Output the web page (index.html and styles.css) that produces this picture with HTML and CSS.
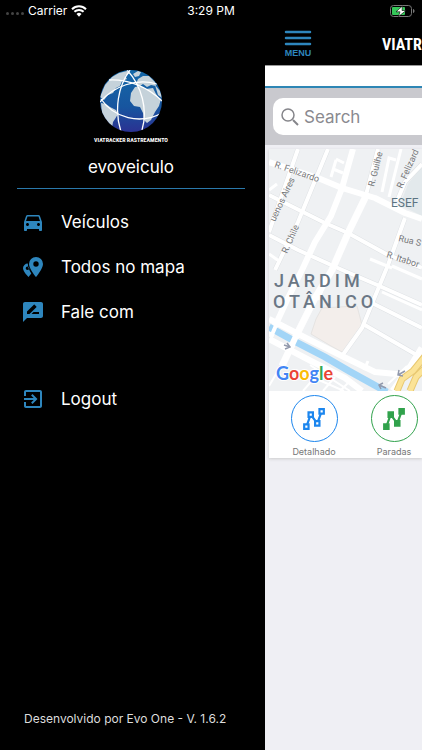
FILE: index.html
```html
<!DOCTYPE html>
<html lang="pt-BR">
<head>
    <meta charset="UTF-8">
    <meta name="viewport" content="width=device-width, initial-scale=1">
    <title>Viatracker Rastreamento</title>
    <link rel="stylesheet" href="styles.css">
</head>
<body>
    <div class="status-bar">
        <div class="status-left">
            <span class="dots"><i></i><i></i><i></i><i></i></span>
            <span>Carrier</span>
            <svg class="wifi" viewBox="0 0 16 12">
                <path d="M1 4.2a10 10 0 0 1 14 0M3.4 6.8a6.5 6.5 0 0 1 9.2 0" fill="none" stroke="#fff" stroke-width="2"/>
                <path d="M5.5 9a3.6 3.6 0 0 1 5 0L8 11.7z" fill="#fff"/>
            </svg>
        </div>
        <div class="status-time">3:29 PM</div>
        <div class="status-right">
            <svg class="battery" viewBox="0 0 26 12">
                <rect x=".5" y=".5" width="21" height="11" rx="3" fill="none" stroke="#777"/>
                <rect x="2" y="2" width="13" height="8" rx="1" fill="#35c759"/>
                <path d="M23 4v4c1-.3 1.500-1 1.500-2S24 4.300 23 4z" fill="#777"/>
                <path d="M12.500 1L6 6.800h4L8.500 11.500 16 5.500h-4z" fill="#fff" stroke="#000" stroke-width=".6"/>
            </svg>
        </div>
    </div>

    <div class="app">
        <aside class="drawer">
            <div class="brand">
                <svg class="globe" viewBox="0 0 62 62">
                    <defs>
                        <linearGradient id="sea" x1="0" y1="0" x2="0" y2="1">
                            <stop offset="0" stop-color="#1468a8"/>
                            <stop offset=".6" stop-color="#17559f"/>
                            <stop offset="1" stop-color="#2b3192"/>
                        </linearGradient>
                        <clipPath id="ball"><circle cx="31" cy="31" r="31"/></clipPath>
                    </defs>
                    <g clip-path="url(#ball)">
                        <rect width="62" height="62" fill="url(#sea)"/>
                        <g fill="#c5d2da">
                            <path d="M5 15L12 7l7-4 8-2 3 2-5 3 2 3-5 2-2 5-4 2-3 5-5 2-4 5-4-3z"/>
                            <path d="M1 33l5 1 4 3 6 3 2 4-3 5-2 3-1 6-5-5-5-9z"/>
                            <path d="M33 4l5-3 3 1-2 4-4 1zM36 14l2-5 5-3 6 0 6 6 1 4-5-1-4 2-4-3-3 2z"/>
                            <path d="M31 23l4-6 6-1 5 3 7-1 3 6 3 4 2 1-2 7-4 6-4 8-4 3-3-3-1-7-3-6-6-1-4-5z"/>
                            <path d="M55 15l5 6 2 7-4-3z"/>
                        </g>
                        <g fill="none" stroke="#fff" stroke-width="1.300">
                            <path d="M30 0C18 16 14 40 21 62M27 0C42 16 48 40 42 60"/>
                            <path d="M0 32C14 16 36 8 57 14M1 29C14 48 40 55 62 43"/>
                            <path d="M9 10C28 9 48 17 62 31"/>
                        </g>
                    </g>
                </svg>
                <div class="brand-name">VIATRACKER RASTREAMENTO</div>
                <div class="user">evoveiculo</div>
            </div>

            <nav class="menu">
                <a href="#">
                    <svg viewBox="0 0 24 24"><path d="M18.920 6.010C18.720 5.420 18.160 5 17.500 5h-11c-.66 0-1.210.42-1.420 1.010L3 12v8c0 .55.45 1 1 1h1c.55 0 1-.45 1-1v-1h12v1c0 .55.45 1 1 1h1c.55 0 1-.45 1-1v-8l-2.080-5.990zM6.500 16c-.83 0-1.500-.67-1.500-1.500S5.670 13 6.500 13s1.500.67 1.500 1.500S7.330 16 6.500 16zm11 0c-.83 0-1.500-.67-1.500-1.500s.67-1.500 1.500-1.500 1.500.67 1.500 1.500-.67 1.500-1.500 1.500zM5 11l1.500-4.500h11L19 11H5z"/></svg>
                    Veículos
                </a>
                <a href="#">
                    <svg viewBox="0 0 24 24"><path fill-rule="evenodd" d="M15 2a7 7 0 0 1 7 7c0 4.800-7 13-7 13S8 13.800 8 9a7 7 0 0 1 7-7zm0 4.300a2.700 2.700 0 1 0 0 5.400 2.700 2.700 0 0 0 0-5.400zM6.800 8.500C6.700 12 8.500 15.500 10.300 18.500L7.500 22S2 16.700 2 13.300A4.800 4.800 0 0 1 6.800 8.500zM6.500 11.500a1.800 1.800 0 1 0 0 3.600 1.800 1.800 0 0 0 0-3.600z"/></svg>
                    Todos no mapa
                </a>
                <a href="#">
                    <svg viewBox="0 0 24 24"><path d="M20 2H4c-1.100 0-1.990.9-1.990 2L2 22l4-4h14c1.100 0 2-.9 2-2V4c0-1.100-.9-2-2-2zM6 14v-2.470l6.880-6.880c.2-.2.51-.2.71 0l1.770 1.770c.2.2.2.51 0 .71L8.470 14H6zm12 0h-7.500l2-2H18v2z"/></svg>
                    Fale com
                </a>
                <a href="#" class="logout">
                    <svg viewBox="0 0 24 24"><path d="M10.090 15.590L11.500 17l5-5-5-5-1.410 1.410L12.670 11H3v2h9.670l-2.580 2.590zM19 3H5c-1.110 0-2 .9-2 2v4h2V5h14v14H5v-4H3v4c0 1.100.89 2 2 2h14c1.100 0 2-.9 2-2V5c0-1.100-.9-2-2-2z"/></svg>
                    Logout
                </a>
            </nav>

            <footer class="version">Desenvolvido por Evo One - V. 1.6.2</footer>
        </aside>

        <main class="page">
            <header class="header">
                <button class="menu-btn" type="button">
                    <svg viewBox="0 0 28 17"><path d="M2 3h24M2 9h24M2 15h24" stroke="#2e86bd" stroke-width="2.500" stroke-linecap="round"/></svg>
                    MENU
                </button>
                <h1>VIATR</h1>
            </header>
            <div class="strip"></div>

            <div class="search">
                <label class="search-box">
                    <svg viewBox="0 0 18 18"><path d="M12 12l5 5" stroke="#85858a" stroke-width="2"/><circle cx="7" cy="7" r="6" fill="none" stroke="#85858a" stroke-width="1.500"/></svg>
                    <input type="text" placeholder="Search" aria-label="Search">
                </label>
            </div>

            <section class="card">
                <svg class="map" viewBox="269 149 153 242" preserveAspectRatio="xMinYMin slice">
                    <rect x="269" y="149" width="153" height="242" fill="#eff1f3"/>
                    <!-- campus and park -->
                    <path d="M422 166L408 184 400 205 422 216z" fill="#e3e9ec"/>
                    <path d="M322 308L357 306 362 325 355 340 344 353 331 346 311 334 316 319z" fill="#f3eeeb" stroke="#e6e4e2"/>
                    <!-- edges of the streets -->
                    <g fill="none" stroke="#dfe2e5" stroke-width="5">
                        <path d="M269 195L325 223 348 233 388 255 422 268M269 235L298 250 340 269 375 284 422 305"/>
                        <path d="M328 149L298 222 275 270M298 149L269 232M405 218L388 265 362 328 342 356"/>
                        <path d="M378 149L366 195M422 164L405 182 397 201M363 324L422 358M372 303L422 328"/>
                    </g>
                    <!-- side streets -->
                    <g fill="none" stroke="#fff" stroke-width="4" stroke-linejoin="round">
                        <path d="M269 195L325 223 348 233 388 255 422 268M269 235L298 250 340 269 375 284 422 305"/>
                        <path d="M328 149L298 222 275 270M298 149L269 232M405 218L388 265 362 328 342 356"/>
                        <path d="M378 149L366 195M422 164L405 182 397 201M363 324L422 358M372 303L422 328"/>
                    </g>
                    <g fill="none" stroke="#fff" stroke-width="3">
                        <path d="M401 149L389 197M396 160L389 158 382 192M336 159L344 163M336 160L331 177M333 169L343 173M269 190L277 184M269 254L279 261M370 259L392 268M392 266L422 279M382 292L422 310M330 272L318 300M364 370L368 361"/>
                    </g>
                    <!-- avenues -->
                    <g fill="none" stroke="#fff" stroke-linejoin="round">
                        <path d="M269 162L318 178 342 188 375 198 405 213 422 219" stroke-width="6"/>
                        <path d="M353 149L342 188 331 216 315 242 302 270 288 298 270 337" stroke-width="6"/>
                        <path d="M366 196L349 231 332 270 315 298 296 336 282 366" stroke-width="7"/>
                        <path d="M269 319L310 340 344 357 375 372 407 375" stroke-width="6"/>
                        <path d="M269 339L311 361 345 378 362 391" stroke-width="6"/>
                        <path d="M422 348L411 366 393 391" stroke-width="7"/>
                        <path d="M407 366L388 384M279 369L269 386M322 369L303 391M335 377L323 391M349 382L340 391M296 370L344 391M310 365L350 391" stroke-width="2"/>
                    </g>
                    <!-- river -->
                    <path d="M269 327L296 342 325 357 349 371 387 392" fill="none" stroke="#a2d5f7" stroke-width="7"/>
                    <path d="M297 334L291 347" stroke="#fff" stroke-width="6"/>
                    <path d="M277 323L271 337" stroke="#fff" stroke-width="4"/>
                    <!-- highway -->
                    <g fill="none">
                        <path d="M426 355L413 371 402 379 397 391M425 368L416 377 410 391" stroke="#e8c871" stroke-width="7"/>
                        <path d="M426 355L413 371 402 379 397 391M425 368L416 377 410 391" stroke="#fbe397" stroke-width="5"/>
                    </g>
                    <g fill="none" stroke="#9299ac" stroke-width="1.500">
                        <path d="M284 345l6 2m-3-4l3 4-5 2M405 371l-7 4m1-5l-1 5 5 1M386 388l-7-3m4-2l-4 2 2 4"/>
                    </g>
                    <g class="street">
                        <text transform="translate(274 167) rotate(19)">R. Felizardo</text>
                        <text transform="translate(275 222) rotate(-65)">uenos Aires</text>
                        <text transform="translate(287 254) rotate(-66)">R. Chile</text>
                        <text transform="translate(374 187) rotate(-76)">R. Guilhe</text>
                        <text transform="translate(402 189) rotate(-66)">R. Felizard</text>
                        <text transform="translate(398 241) rotate(13)">Rua S</text>
                        <text transform="translate(386 257) rotate(18)">R. Itabor</text>
                    </g>
                    <text class="place" x="391" y="207">ESEF</text>
                    <g class="district">
                        <text x="274" y="287">JARDIM</text>
                        <text x="273" y="308">OTÂNICO</text>
                    </g>
                    <text class="google" x="276" y="380"><tspan fill="#4285f4">G</tspan><tspan fill="#ea4335">o</tspan><tspan fill="#fbbc05">o</tspan><tspan fill="#4285f4">g</tspan><tspan fill="#34a853">l</tspan><tspan fill="#ea4335">e</tspan></text>
                </svg>

                <div class="actions">
                    <button class="action blue" type="button">
                        <span class="circle">
                            <svg viewBox="0 0 22 22"><path d="M4 18L8 7l6 8 4-11" fill="none" stroke="currentColor" stroke-width="2"/><g fill="#fff" stroke="currentColor" stroke-width="2"><path d="M2 16h4v4H2zM6 5h4v4H6zM12 13h4v4h-4zM16 2h4v4h-4z"/></g></svg>
                        </span>
                        Detalhado
                    </button>
                    <button class="action green" type="button">
                        <span class="circle">
                            <svg viewBox="0 0 22 22"><path d="M4 18L8 7l6 8 4-11" fill="none" stroke="currentColor" stroke-width="2"/><g fill="currentColor" stroke="currentColor" stroke-width="2"><path d="M2 16h4v4H2zM6 5h4v4H6zM12 13h4v4h-4zM16 2h4v4h-4z"/></g></svg>
                        </span>
                        Paradas
                    </button>
                </div>
            </section>
        </main>
    </div>
</body>
</html>
```
FILE: styles.css
```css
* {
    box-sizing: border-box;
}

body {
    margin: 0;
    height: 100vh;
    display: flex;
    flex-direction: column;
    overflow: hidden;
    background: #000;
    color: #fff;
    font-family: Inter, "Liberation Sans", sans-serif;
}

button {
    border: none;
    background: none;
    padding: 0;
    font-family: inherit;
    cursor: pointer;
}

svg {
    display: block;
    flex-shrink: 0;
}

/* status bar */
.status-bar {
    display: grid;
    grid-template-columns: 1fr auto 1fr;
    align-items: center;
    height: 21px;
    padding: 0 6px;
    font-size: 12px;
}

.status-left {
    display: flex;
    align-items: center;
    gap: 4px;
}

.dots {
    display: flex;
    gap: 2px;
    padding-top: 6px;
}

.dots i {
    width: 3px;
    height: 3px;
    border-radius: 50%;
    background: #444;
}

.wifi {
    width: 16px;
    height: 12px;
}

.status-right {
    display: flex;
    justify-content: flex-end;
}

.battery {
    width: 26px;
    height: 12px;
}

.app {
    flex: 1;
    display: flex;
    min-height: 0;
}

/* drawer */
.drawer {
    flex: 0 0 265px;
    display: flex;
    flex-direction: column;
    padding: 49px 20px 22px 17px;
}

.brand {
    display: flex;
    flex-direction: column;
    align-items: center;
    border-bottom: 1px solid #2a79ab;
}

.globe {
    width: 62px;
    height: 62px;
}

.brand-name {
    margin-top: 2px;
    font: bold 6px/12px "Liberation Sans Narrow", "Roboto Condensed", Roboto, sans-serif;
    white-space: nowrap;
}

.user {
    padding: 9px 0;
    font-size: 17px;
    line-height: 24px;
}

.menu {
    display: flex;
    flex-direction: column;
    padding-top: 10px;
}

.menu a {
    display: flex;
    align-items: center;
    gap: 16px;
    height: 45px;
    padding-left: 4px;
    color: #fff;
    font-size: 17px;
    text-decoration: none;
}

.menu svg {
    width: 24px;
    height: 24px;
    fill: #2e86bd;
}

.menu .logout {
    margin-top: 42px;
}

.version {
    margin-top: auto;
    padding-left: 7px;
    color: #ddd;
    font-size: 12px;
    line-height: 18px;
    white-space: nowrap;
}

/* page pushed aside by the drawer */
.page {
    flex: 1;
    min-width: 0;
    overflow: hidden;
    background: #efeff4;
}

.header {
    display: flex;
    align-items: center;
    gap: 70px;
    height: 45px;
    padding-left: 19px;
    background: #000;
    border-bottom: 1px solid #999;
}

.menu-btn {
    display: flex;
    flex-direction: column;
    align-items: center;
    flex-shrink: 0;
    gap: 2px;
    color: #2e86bd;
    font: bold 9px/10px "Liberation Sans", sans-serif;
}

.menu-btn svg {
    width: 28px;
    height: 17px;
}

.header h1 {
    margin: 0;
    padding-top: 4px;
    font: bold 16px/24px "Liberation Sans Narrow", "Roboto Condensed", Roboto, sans-serif;
}

.strip {
    height: 22px;
    background: #fff;
    border-bottom: 2px solid #2e86b5;
}

.search {
    height: 57px;
    padding: 10px 0 10px 8px;
    background: #c9c9ce;
}

.search-box {
    display: flex;
    align-items: center;
    gap: 5px;
    height: 37px;
    padding-left: 8px;
    background: #fff;
    border-radius: 10px 0 0 10px;
}

.search-box svg {
    width: 18px;
    height: 18px;
}

.search-box input {
    flex: 1;
    min-width: 0;
    padding: 0;
    border: none;
    outline: none;
    background: none;
    font-family: inherit;
    font-size: 17px;
}

.search-box input::placeholder {
    color: #8a8a8f;
    opacity: 1;
}

.card {
    margin: 4px 0 0 4px;
    background: #fff;
    box-shadow: 0 1px 3px #ccc;
}

.map {
    width: 100%;
    height: 242px;
}

.street {
    fill: #77787a;
    font: 9px Roboto, sans-serif;
}

.place {
    fill: #5c7482;
    font: 12px Roboto, sans-serif;
}

.district {
    fill: #6a7785;
    font: 500 18px Roboto, sans-serif;
    letter-spacing: 4px;
}

.google {
    font: bold 18px Lato, sans-serif;
    stroke: #fff;
    stroke-width: 2px;
    paint-order: stroke;
}

.actions {
    display: flex;
    padding: 4px 0 0 5px;
    overflow: hidden;
}

.action {
    flex: 0 0 80px;
    display: flex;
    flex-direction: column;
    align-items: center;
    gap: 4px;
    color: #777;
    font-size: 9px;
    line-height: 12px;
}

.circle {
    display: flex;
    align-items: center;
    justify-content: center;
    width: 47px;
    height: 47px;
    border: 1px solid;
    border-radius: 50%;
}

.circle svg {
    width: 24px;
    height: 24px;
}

.blue .circle {
    color: #1c86ee;
}

.green .circle {
    color: #31a24c;
}
```
